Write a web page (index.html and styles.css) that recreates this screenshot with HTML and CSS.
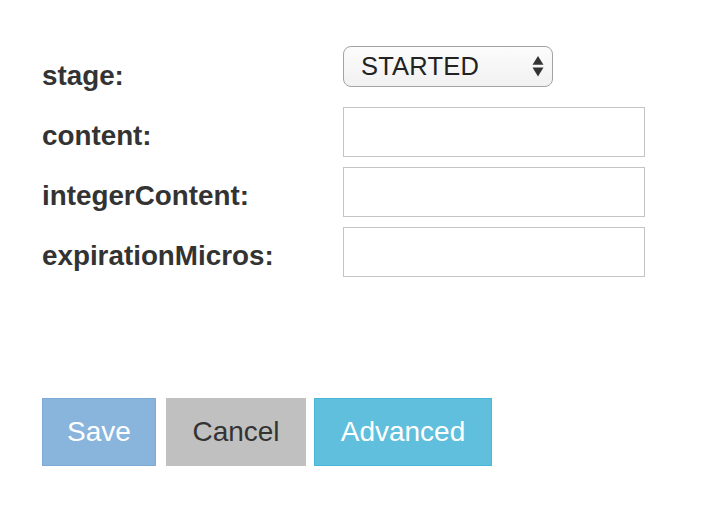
FILE: index.html
```html
<!DOCTYPE html>
<html>
<head>
<meta charset="utf-8">
<link rel="stylesheet" href="styles.css">
</head>
<body>
<form class="form">
  <div class="fields">
    <label class="label">stage:</label>
    <div class="control">
      <div class="select">
        <span class="select-text">STARTED</span>
        <svg class="arrows" width="12" height="22" viewBox="0 0 12 22">
          <polygon points="6,0 11.5,8.7 0.5,8.7" fill="#333"/>
          <polygon points="0.5,11.5 11.5,11.5 6,20.5" fill="#333"/>
        </svg>
      </div>
    </div>
    <label class="label">content:</label>
    <div class="control"><input class="input" type="text"></div>
    <label class="label">integerContent:</label>
    <div class="control"><input class="input" type="text"></div>
    <label class="label">expirationMicros:</label>
    <div class="control"><input class="input" type="text"></div>
  </div>
  <div class="actions">
    <button type="button" class="btn btn-save">Save</button>
    <button type="button" class="btn btn-cancel">Cancel</button>
    <button type="button" class="btn btn-advanced">Advanced</button>
  </div>
</form>
</body>
</html>
```
FILE: styles.css
```css
html, body {
  margin: 0;
  padding: 0;
  background: #fff;
}
body {
  font-family: "Liberation Sans", Arial, Helvetica, sans-serif;
  color: #333;
}
.form {
  padding: 47px 0 0 42px;
}
.fields {
  display: grid;
  grid-template-columns: 301px 302px;
  grid-auto-rows: 50px;
  row-gap: 10px;
}
.label {
  font-weight: bold;
  font-size: 27.8px;
  line-height: 40px;
  padding-top: 9px;
  color: #333;
  white-space: nowrap;
}
.control {
  display: flex;
  align-items: flex-start;
}
.input {
  box-sizing: border-box;
  width: 302px;
  height: 50px;
  margin: 0;
  border: 1px solid #c4c4c4;
  border-radius: 0;
  background: #fff;
  padding: 0 10px;
  font: inherit;
  outline: none;
}
.select {
  box-sizing: border-box;
  margin-top: -1px;
  width: 210px;
  height: 41px;
  border: 1px solid #a3a3a3;
  border-radius: 8px;
  background: linear-gradient(#fcfcfc, #f1f1f1);
  display: flex;
  align-items: center;
  justify-content: space-between;
  padding: 0 8px 0 17px;
}
.select-text {
  font-size: 25.5px;
  color: #222;
  letter-spacing: 0.2px;
  line-height: 1;
  padding-top: 1px;
}
.arrows {
  display: block;
  margin-top: 1px;
}
.actions {
  display: flex;
  margin-top: 121px;
}
.btn {
  box-sizing: border-box;
  height: 68px;
  margin: 0;
  padding: 0;
  border: 1px solid transparent;
  border-radius: 0;
  font-family: "Liberation Sans", Arial, Helvetica, sans-serif;
  font-size: 28px;
  line-height: 40px;
  cursor: pointer;
}
.btn-save {
  width: 114px;
  background: #89b4dc;
  border-color: #7eaad6;
  color: #fff;
}
.btn-cancel {
  width: 140px;
  margin-left: 10px;
  background: #c0c0c0;
  border-color: #c0c0c0;
  color: #333;
}
.btn-advanced {
  width: 178px;
  margin-left: 8px;
  background: #5fbfdc;
  border-color: #46b8da;
  color: #fff;
}
```
